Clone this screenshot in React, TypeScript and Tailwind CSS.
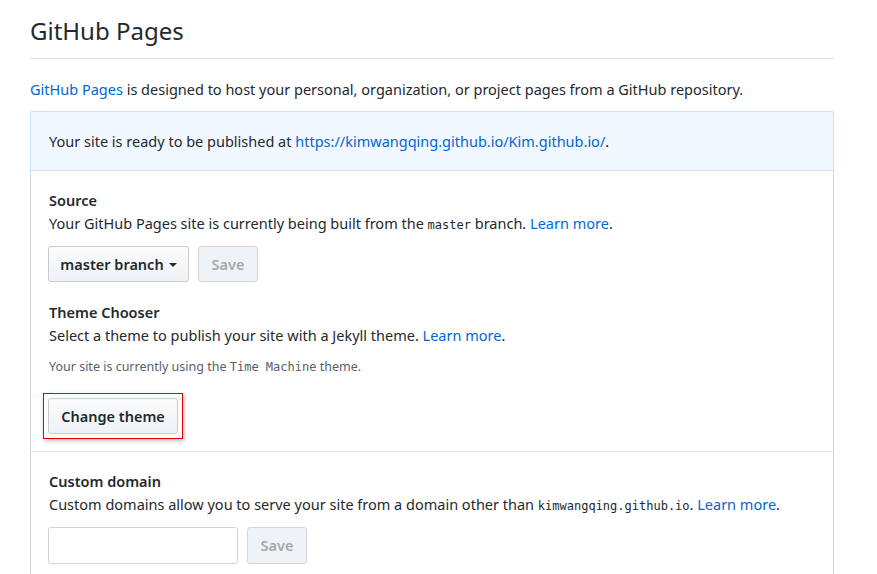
export default function App() {
  return (
    <div className="min-h-[574px] bg-white text-[#24292e] text-[14.5px] leading-[21px] overflow-hidden" style={{ fontFamily: '"Noto Sans", sans-serif' }}>
      <div className="w-[804px] ml-[30px] pt-[14px]">
        <h2 className="text-[24px] leading-[34px] font-normal pb-[10px] border-b border-[#e1e4e8]">GitHub Pages</h2>
        <p className="mt-[20px]">
          <a className="text-[#0366d6]">GitHub Pages</a> is designed to host your personal, organization, or project pages from a GitHub repository.
        </p>
        <div className="mt-[11px] border border-[#d1d5da] rounded-t-[3px] border-b-0">
          <div className="bg-[#f1f8ff] border-b border-[#c8e1ff] px-[18px] pt-[19px] pb-[18px] -m-px mb-0 border-x border-t rounded-t-[3px]">
            Your site is ready to be published at <a className="text-[#0366d6]">https://kimwangqing.github.io/Kim.github.io/</a>.
          </div>
          <div className="px-[18px] pt-[19px] pb-[12px]">
            <h4 className="font-semibold">Source</h4>
            <p className="mt-[2px]">
              Your GitHub Pages site is currently being built from the <code className="text-[12px]" style={{ fontFamily: '"DejaVu Sans Mono", monospace' }}>master</code> branch. <a className="text-[#0366d6]">Learn more</a>.
            </p>
            <div className="flex gap-[9px] mt-[10px] -ml-px">
              <button className="h-[36px] w-[141px] justify-center rounded-[3px] border border-[#c8cbce] bg-gradient-to-b from-[#fafbfc] to-[#eff3f6] font-semibold flex items-center gap-[5px]">
                master branch
                <span className="w-0 h-0 border-x-[4px] border-x-transparent border-t-[4px] border-t-[#24292e] mt-[1px]" />
              </button>
              <button className="h-[36px] w-[60px] rounded-[3px] border border-[#d4d7da] bg-[#eff3f6] text-[#a2a8ae] font-semibold">Save</button>
            </div>
            <h4 className="font-semibold mt-[20px]">Theme Chooser</h4>
            <p className="mt-[2px]">
              Select a theme to publish your site with a Jekyll theme. <a className="text-[#0366d6]">Learn more</a>.
            </p>
            <p className="text-[12.5px] text-[#586069] mt-[10px]">
              Your site is currently using the <code className="text-[12px]" style={{ fontFamily: '"DejaVu Sans Mono", monospace' }}>Time Machine</code> theme.
            </p>
            <div className="mt-[15px] -ml-[6px] inline-block border border-[#e00000] p-[4px] shadow-[1px_2px_4px_rgba(0,0,0,0.25)]">
              <button className="h-[36px] w-[130px] rounded-[3px] border border-[#c8cbce] bg-gradient-to-b from-[#fafbfc] to-[#eff3f6] font-semibold">Change theme</button>
            </div>
          </div>
          <div className="border-t border-[#e1e4e8] px-[18px] pt-[19px] pb-[20px]">
            <h4 className="font-semibold">Custom domain</h4>
            <p className="mt-[2px]">
              Custom domains allow you to serve your site from a domain other than <code className="text-[12px]" style={{ fontFamily: '"DejaVu Sans Mono", monospace' }}>kimwangqing.github.io</code>. <a className="text-[#0366d6]">Learn more</a>.
            </p>
            <div className="flex gap-[9px] mt-[10px] -ml-px">
              <input className="h-[37px] w-[190px] rounded-[3px] border border-[#d1d5da] px-[8px] outline-none" />
              <button className="h-[37px] w-[60px] rounded-[3px] border border-[#d4d7da] bg-[#eff3f6] text-[#a2a8ae] font-semibold">Save</button>
            </div>
          </div>
        </div>
      </div>
    </div>
  );
}
